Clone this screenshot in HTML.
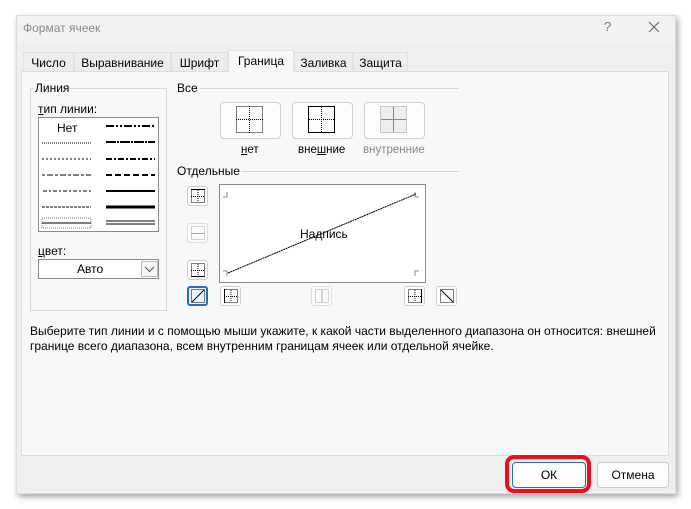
<!DOCTYPE html>
<html><head><meta charset="utf-8"><style>
*{box-sizing:border-box;margin:0;padding:0}
body{width:691px;height:509px;background:#fff;position:relative;overflow:hidden;font-family:"Liberation Sans","DejaVu Sans",sans-serif;font-size:12px;color:#000}
.a{position:absolute}
.win{left:16px;top:15px;width:660px;height:479px;background:#efefef;box-shadow:2px 3px 6px rgba(0,0,0,.35);border:1px solid #ddd}
.tab{top:52px;height:20px;font-size:12px;text-align:center;line-height:20px;background:#ededed;border:1px solid #e2e2e2;border-bottom:none}
.btn{background:#fdfdfd;border:1px solid #d0d0d0;border-radius:4px}
.sb{width:21px;height:20px;background:#fdfdfd;border:1px solid #d0d0d0;border-radius:3px}
.lbl{font-size:11.5px}
</style></head><body>
<div class="a win"></div>
<div class="a" style="left:17px;top:16px;width:658px;height:28px;background:#f2f2f2"></div>
<div class="a" style="left:23px;top:21px;color:#8a8a8a;font-size:12px">Формат ячеек</div>
<div class="a" style="left:604px;top:19px;color:#777;font-size:13px">?</div>
<svg class="a" style="left:648px;top:21px" width="12" height="12"><path d="M1 1L11 11M11 1L1 11" stroke="#666" stroke-width="1.1"/></svg>
<div class="a tab" style="left:23px;width:51px">Число</div>
<div class="a tab" style="left:74px;width:97px">Выравнивание</div>
<div class="a tab" style="left:171px;width:57px">Шрифт</div>
<div class="a tab" style="left:228px;top:50px;height:23px;width:66px;background:#f8f8f8">Граница</div>
<div class="a tab" style="left:294px;width:59px">Заливка</div>
<div class="a tab" style="left:353px;width:55px">Защита</div>
<div class="a" style="left:21px;top:71px;width:648px;height:385px;background:#f8f8f8;border:1px solid #ddd"></div>
<div class="a" style="left:229px;top:70px;width:64px;height:3px;background:#f8f8f8"></div>
<!-- Линия group -->
<div class="a" style="left:30px;top:88px;width:137px;height:223px;border:1px solid #d8d8d8"></div>
<div class="a" style="left:34px;top:81px;background:#f8f8f8;padding:0 1px">Линия</div>
<div class="a" style="left:38px;top:102px"><u>т</u>ип линии:</div>
<div class="a" style="left:38px;top:117px;width:121px;height:115px;background:#fff;border:1px solid #8a8a8a"></div>
<div class="a" style="left:57px;top:121px">Нет</div>
<svg class="a" style="left:40px;top:118px" width="118" height="113">
<g stroke="#000" fill="none">
<line x1="2" y1="25" x2="51" y2="25" stroke-dasharray="1,1"/>
<line x1="2" y1="41" x2="51" y2="41" stroke-dasharray="2,2"/>
<line x1="2" y1="57" x2="51" y2="57" stroke-dasharray="3,2,6,2"/>
<line x1="3" y1="73" x2="51" y2="73" stroke-dasharray="4,2,2,2"/>
<line x1="2" y1="89" x2="51" y2="89" stroke-dasharray="3,1"/>
<rect x="2" y="100" width="49" height="10" stroke-dasharray="1,1" stroke="#777"/>
<line x1="2" y1="105" x2="51" y2="105"/>
<line x1="66" y1="8" x2="115" y2="8" stroke-width="2" stroke-dasharray="8,2,2,2,2,2"/>
<line x1="66" y1="24" x2="115" y2="24" stroke-width="2" stroke-dasharray="10,1,2,1"/>
<line x1="66" y1="41" x2="115" y2="41" stroke-width="2" stroke-dasharray="6,2,2,2"/>
<line x1="66" y1="57" x2="115" y2="57" stroke-width="2" stroke-dasharray="6,3"/>
<line x1="66" y1="73" x2="115" y2="73" stroke-width="2"/>
<line x1="66" y1="89" x2="115" y2="89" stroke-width="3"/>
<line x1="66" y1="103" x2="115" y2="103"/><line x1="66" y1="106" x2="115" y2="106"/>
</g></svg>
<div class="a" style="left:38px;top:244px"><u>ц</u>вет:</div>
<div class="a" style="left:38px;top:259px;width:121px;height:20px;background:#fff;border:1px solid #8a8a8a"></div>
<div class="a" style="left:77px;top:262px">Авто</div>
<div class="a" style="left:141px;top:261px;width:17px;height:16px;border:1px solid #bbb;background:#f7f7f7"></div>
<svg class="a" style="left:144px;top:266px" width="11" height="7"><path d="M1 1L5.5 5.5L10 1" stroke="#555" fill="none"/></svg>
<!-- Все -->
<div class="a" style="left:177px;top:81px">Все</div>
<div class="a" style="left:200px;top:88px;width:259px;height:1px;background:#d8d8d8"></div>
<div class="a btn" style="left:220px;top:102px;width:61px;height:37px"></div>
<div class="a btn" style="left:292px;top:102px;width:61px;height:37px"></div>
<div class="a btn" style="left:364px;top:102px;width:61px;height:37px"></div>
<svg class="a" style="left:236px;top:106px" width="28" height="28"><g stroke="#000" stroke-dasharray="1,1" fill="none"><rect x="0.5" y="0.5" width="26" height="26"/><line x1="13.5" y1="0" x2="13.5" y2="27"/><line x1="0" y1="13.5" x2="27" y2="13.5"/></g></svg>
<svg class="a" style="left:308px;top:106px" width="28" height="28"><rect x="0.5" y="0.5" width="26" height="26" fill="none" stroke="#000"/><g stroke="#000" stroke-dasharray="1,1"><line x1="13.5" y1="1" x2="13.5" y2="26"/><line x1="1" y1="13.5" x2="26" y2="13.5"/></g></svg>
<svg class="a" style="left:380px;top:106px" width="28" height="28"><rect x="0.5" y="0.5" width="26" height="26" fill="#eee" stroke="#999" stroke-dasharray="1,1"/><g stroke="#888"><line x1="13.5" y1="1" x2="13.5" y2="26"/><line x1="1" y1="13.5" x2="26" y2="13.5"/></g></svg>
<div class="a lbl" style="left:241px;top:144px"><u>н</u>ет</div>
<div class="a lbl" style="left:298px;top:144px">вне<u>ш</u>ние</div>
<div class="a lbl" style="left:363px;top:144px;color:#888">внутренние</div>
<div class="a" style="left:177px;top:164px">Отдельные</div>
<div class="a" style="left:241px;top:171px;width:218px;height:1px;background:#d8d8d8"></div>
<!-- side buttons -->
<div class="a sb" style="left:187px;top:186px"></div>
<div class="a sb" style="left:187px;top:223px;opacity:.6"></div>
<div class="a sb" style="left:187px;top:260px"></div>
<div class="a sb" style="left:187px;top:286px;border:2px solid #2a6cb8;background:#eaf2fb"></div>
<div class="a sb" style="left:220px;top:286px"></div>
<div class="a sb" style="left:311px;top:286px;opacity:.6"></div>
<div class="a sb" style="left:404px;top:286px"></div>
<div class="a sb" style="left:436px;top:286px"></div>
<svg class="a" style="left:0;top:0" width="691" height="509"><g fill="none" stroke="#000">
<g stroke-dasharray="1,1"><rect x="191.5" y="189.5" width="13" height="13"/><line x1="198" y1="190" x2="198" y2="203"/><line x1="191" y1="196.5" x2="205" y2="196.5"/></g><line x1="191" y1="189.5" x2="205" y2="189.5"/>
<g stroke="#aaa"><rect x="191.5" y="226.5" width="13" height="13" stroke-dasharray="1,1"/><line x1="191" y1="233.5" x2="205" y2="233.5"/></g>
<g stroke-dasharray="1,1"><rect x="191.5" y="263.5" width="13" height="13"/><line x1="198" y1="264" x2="198" y2="277"/><line x1="191" y1="270.5" x2="205" y2="270.5"/></g><line x1="191" y1="276.5" x2="205" y2="276.5"/>
<rect x="191.5" y="289.5" width="13" height="13" stroke-dasharray="1,1"/><line x1="192" y1="302" x2="204" y2="290"/>
<g stroke-dasharray="1,1"><rect x="224.5" y="289.5" width="13" height="13"/><line x1="231" y1="290" x2="231" y2="303"/><line x1="224" y1="296.5" x2="238" y2="296.5"/></g><line x1="224.5" y1="289" x2="224.5" y2="303"/>
<g stroke="#aaa"><rect x="315.5" y="289.5" width="13" height="13" stroke-dasharray="1,1"/><line x1="322" y1="290" x2="322" y2="303"/></g>
<g stroke-dasharray="1,1"><rect x="408.5" y="289.5" width="13" height="13"/><line x1="415" y1="290" x2="415" y2="303"/><line x1="408" y1="296.5" x2="422" y2="296.5"/></g><line x1="421.5" y1="289" x2="421.5" y2="303"/>
<rect x="440.5" y="289.5" width="13" height="13" stroke-dasharray="1,1"/><line x1="441" y1="290" x2="453" y2="302"/>
</g></svg>
<!-- preview -->
<div class="a" style="left:219px;top:184px;width:207px;height:99px;background:#fff;border:1px solid #8a8a8a"></div>
<svg class="a" style="left:219px;top:184px" width="207" height="99"><g stroke="#888" fill="none"><path d="M8 8V13H4M196 8V13H200M8 92V87H4M196 92V87H200"/></g><line x1="9" y1="89" x2="197" y2="10" stroke="#000" stroke-dasharray="2,0.5"/></svg>
<div class="a" style="left:300px;top:227px">Надпись</div>
<div class="a" style="left:30px;top:324px;line-height:15px;width:640px">Выберите тип линии и с помощью мыши укажите, к какой части выделенного диапазона он относится: внешней<br>границе всего диапазона, всем внутренним границам ячеек или отдельной ячейке.</div>
<!-- buttons -->
<div class="a" style="left:505px;top:455px;width:86px;height:38px;border:4px solid #e8101c;border-radius:9px"></div>
<div class="a" style="left:512px;top:462px;width:74px;height:26px;background:#fdfdfd;border:1px solid #2a6cb8;border-radius:4px;text-align:center;line-height:24px">ОК</div>
<div class="a" style="left:597px;top:462px;width:72px;height:26px;background:#fdfdfd;border:1px solid #ccc;border-radius:4px;text-align:center;line-height:24px">Отмена</div>
</body></html>
